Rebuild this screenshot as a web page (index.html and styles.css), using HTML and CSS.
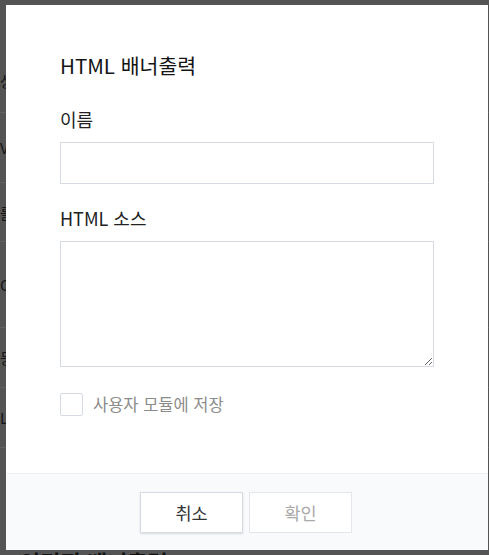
FILE: index.html
```html
<!DOCTYPE html>
<html lang="ko">
<head>
<meta charset="utf-8">
<title>HTML 배너출력</title>
<link rel="stylesheet" href="styles.css">
</head>
<body>
<div class="page">
  <div class="page-row row-a"><span>상</span></div>
  <div class="page-row row-b"><span>V</span></div>
  <div class="page-row row-c"><span>를</span></div>
  <div class="page-row row-d"><span>C</span></div>
  <div class="page-row row-e"><span>등</span></div>
  <div class="page-row row-f"><span>L</span></div>
  <div class="page-title">인믹진 배너출력</div>
</div>
<div class="overlay">
  <div class="modal">
    <div class="modal-body">
      <h2 class="modal-title">HTML 배너출력</h2>
      <label class="field-label" for="name">이름</label>
      <input class="text-input" id="name" type="text">
      <label class="field-label field-label-2" for="src">HTML 소스</label>
      <textarea class="text-area" id="src"></textarea>
      <label class="check-row">
        <span class="check-box"></span>
        <span class="check-text">사용자 모듈에 저장</span>
      </label>
    </div>
    <div class="modal-footer">
      <button class="btn" type="button">취소</button>
      <button class="btn btn-disabled" type="button">확인</button>
    </div>
  </div>
</div>
</body>
</html>
```
FILE: styles.css
```css
* { box-sizing: border-box; }
html, body {
  margin: 0;
  padding: 0;
  width: 489px;
  height: 555px;
  overflow: hidden;
}
body {
  font-family: "Noto Sans CJK KR", "Noto Sans", sans-serif;
  background: #5a5a5a;
  position: relative;
}
.page {
  display: flex;
  flex-direction: column;
  padding-top: 48px;
}
.page-row {
  border-bottom: 1px solid #666666;
  display: flex;
  align-items: center;
  font-size: 15px;
  color: #161616;
}
.row-a { height: 65px; }
.row-b { height: 70px; }
.row-c { height: 59px; }
.row-d { height: 86px; }
.row-e { height: 60px; }
.row-f { height: 60px; }
.page-title {
  margin-top: 97px;
  padding-left: 20px;
  font-size: 22px;
  line-height: 32px;
  font-weight: 700;
  color: #111;
}
.overlay {
  position: absolute;
  top: 0;
  left: 0;
  width: 489px;
  height: 555px;
  background: rgba(30, 30, 30, 0.08);
  padding: 5px 1px 5px 6px;
}
.modal {
  width: 482px;
  height: 545px;
  background: #ffffff;
  display: flex;
  flex-direction: column;
}
.modal-body {
  flex: 1;
  padding: 46px 54px 0 54px;
  display: flex;
  flex-direction: column;
}
.modal-title {
  margin: 0;
  font-size: 20.5px;
  line-height: 28px;
  font-weight: 400;
  color: #151515;
}
.field-label {
  margin-top: 27px;
  font-size: 18px;
  line-height: 26px;
  color: #222;
}
.field-label-2 {
  margin-top: 21px;
}
.text-input {
  margin-top: 10px;
  width: 374px;
  height: 42px;
  border: 1px solid #d6dbe3;
  border-radius: 0;
  background: #fff;
  font-family: inherit;
  font-size: 15px;
  padding: 0 12px;
  outline: none;
}
.text-area {
  display: block;
  margin-top: 10px;
  width: 374px;
  height: 126px;
  border: 1px solid #d6dbe3;
  border-radius: 0;
  background: #fff;
  font-family: inherit;
  font-size: 15px;
  padding: 8px 12px;
  outline: none;
}
.check-row {
  margin-top: 26px;
  display: flex;
  align-items: center;
  gap: 10px;
}
.check-box {
  width: 23px;
  height: 23px;
  border: 1px solid #d6dbe3;
  border-radius: 2px;
  background: #fff;
}
.check-text {
  font-size: 16.5px;
  line-height: 23px;
  color: #8c8c8c;
}
.modal-footer {
  height: 77px;
  background: #f9fafc;
  border-top: 1px solid #eef0f3;
  display: flex;
  justify-content: center;
  align-items: flex-start;
  gap: 6px;
  padding: 18px 2px 0 0;
}
.btn {
  width: 103px;
  height: 41px;
  background: #fff;
  border: 1px solid #d6dbe3;
  border-radius: 0;
  font-family: inherit;
  font-size: 17.5px;
  color: #333;
  box-shadow: 0 1px 2px rgba(0, 0, 0, 0.12);
  padding: 0;
}
.btn-disabled {
  color: #a9a9a9;
  box-shadow: none;
  border-color: #e3e6ec;
}
```
